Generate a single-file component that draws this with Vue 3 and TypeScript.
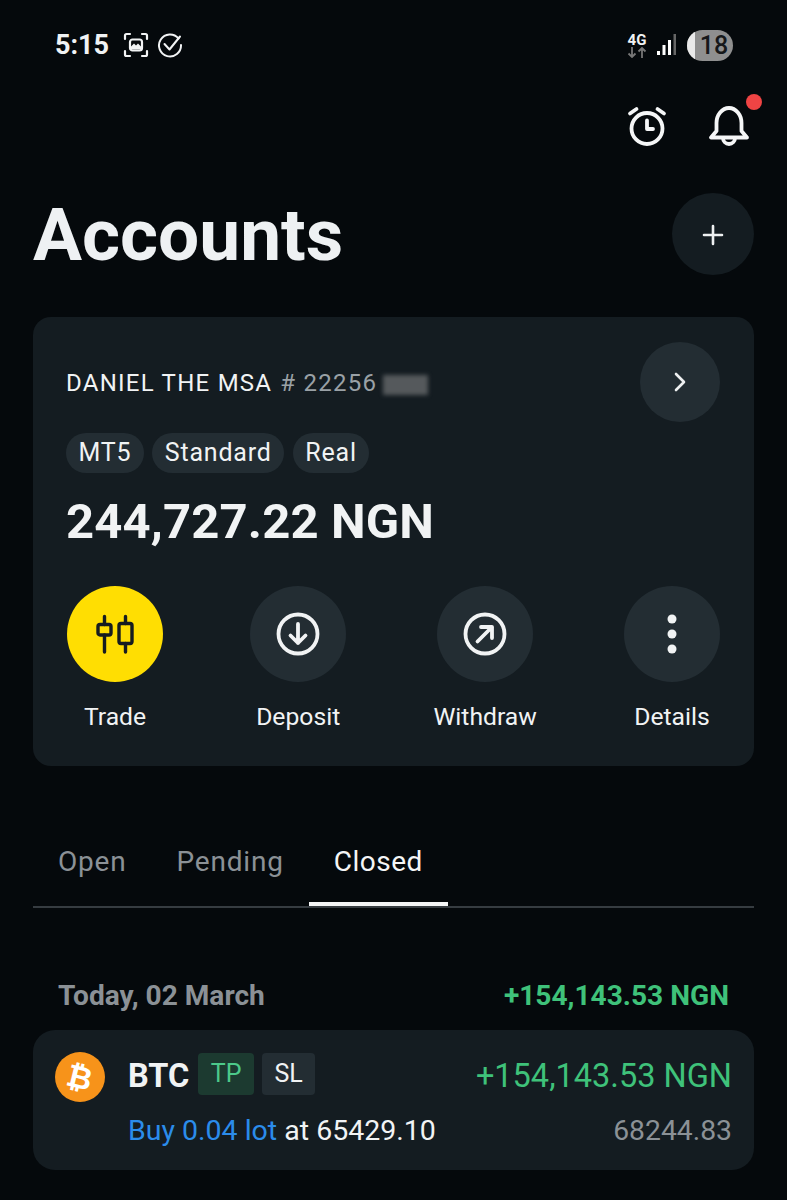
<template>
  <div class="page">
    <div class="status-bar">
      <div class="status-left">
        <span class="time">5:15</span>
        <svg class="shot-icon" width="26" height="26" viewBox="0 0 26 26" fill="none" stroke="#f2f4f5" stroke-width="2.2" stroke-linecap="round">
          <path d="M2 7V3.500A1.500 1.500 0 0 1 3.500 2H7M19 2h3.500A1.500 1.500 0 0 1 24 3.500V7M24 19v3.500a1.500 1.500 0 0 1-1.500 1.500H19M7 24H3.500A1.500 1.500 0 0 1 2 22.500V19" />
          <rect x="7" y="7.500" width="12" height="11" rx="2.500" />
          <path d="M7.500 15l3.500-3.500 2 2 2-2 3.500 3.500v2.500h-11z" fill="#f2f4f5" stroke="none" />
        </svg>
        <svg class="check-icon" width="26" height="26" viewBox="0 0 26 26" fill="none" stroke="#f2f4f5" stroke-width="2" stroke-linecap="round" stroke-linejoin="round">
          <path d="M21.500 6.500A11 11 0 1 0 24 13" />
          <path d="M7.500 12l5 5.500 10.500-13" />
        </svg>
      </div>
      <div class="status-right">
        <div class="net">
          <span class="net-label">4G</span>
          <svg width="20" height="11" viewBox="0 0 20 11" fill="none" stroke="#777" stroke-width="1.800">
            <path d="M5 0v10M1.500 6.500L5 10l3.500-3.500M15 11V1M11.500 4.500L15 1l3.500 3.500" />
          </svg>
        </div>
        <svg class="signal" width="20" height="22" viewBox="0 0 20 22">
          <rect x="0" y="17" width="3" height="4" fill="#fff" />
          <rect x="5.500" y="11" width="3" height="10" fill="#fff" />
          <rect x="11" y="6" width="3" height="15" fill="#fff" />
          <rect x="16.500" y="0" width="2.500" height="21" fill="#666" />
        </svg>
        <div class="battery"><span class="battery-fill"></span><span class="battery-text">18</span></div>
      </div>
    </div>

    <div class="top-actions">
      <svg width="42" height="42" viewBox="0 0 42 42" fill="none" stroke="#f5f6f7" stroke-width="3.800" stroke-linecap="round" stroke-linejoin="round">
        <circle cx="21" cy="23.500" r="15.500" />
        <path d="M21 15.500v8.500h6" />
        <path d="M4 8.500l6.500-4.500M38 8.500L31.500 4" />
      </svg>
      <div class="bell-wrap">
        <svg width="42" height="44" viewBox="0 0 42 44" fill="none" stroke="#f5f6f7" stroke-width="3.800" stroke-linecap="round" stroke-linejoin="round">
          <path d="M3 32.500h36l-5.500-6.500V18C33.500 10 28 3 21 3S8.500 10 8.500 18v8z" />
          <path d="M15 33a6 6 0 0 0 12 0" />
        </svg>
        <span class="bell-dot"></span>
      </div>
    </div>

    <div class="heading">
      <h1 class="title">Accounts</h1>
      <button class="add-btn">
        <svg width="22" height="22" viewBox="0 0 22 22" stroke="#eef0f1" stroke-width="2.600" stroke-linecap="round">
          <path d="M11 2v18M2 11h18" />
        </svg>
      </button>
    </div>

    <section class="account-card">
      <div class="account-head">
        <div class="account-name">
          <span>DANIEL THE MSA</span>
          <span class="account-no"># 22256</span>
          <span class="blur-patch"></span>
        </div>
        <button class="chevron-btn">
          <svg width="14" height="20" viewBox="0 0 14 20" fill="none" stroke="#eef0f1" stroke-width="2.600" stroke-linecap="round" stroke-linejoin="round">
            <path d="M3 2l8 8-8 8" />
          </svg>
        </button>
      </div>
      <div class="pills">
        <span class="pill" v-for="tag in tags" :key="tag">{{ tag }}</span>
      </div>
      <div class="balance">244,727.22 NGN</div>
      <div class="card-actions">
        <div class="card-action">
          <div class="round yellow">
            <svg width="42" height="40" viewBox="0 0 42 40" fill="none" stroke="#161c20" stroke-width="3.400" stroke-linecap="round" stroke-linejoin="round">
              <path d="M10.500 2.500v8M10.500 21v17M31.500 2.500v7M31.500 29.500V38" />
              <rect x="4" y="10.500" width="13" height="10.500" rx="2" />
              <rect x="25" y="9.500" width="13" height="20" rx="2" />
            </svg>
          </div>
          <span class="action-label">Trade</span>
        </div>
        <div class="card-action">
          <div class="round">
            <svg width="44" height="44" viewBox="0 0 44 44" fill="none" stroke="#f1f3f4" stroke-width="3.800" stroke-linecap="round" stroke-linejoin="round">
              <circle cx="22" cy="22" r="19.500" />
              <path d="M22 12v19M14.500 23.500L22 31l7.500-7.500" />
            </svg>
          </div>
          <span class="action-label">Deposit</span>
        </div>
        <div class="card-action">
          <div class="round">
            <svg width="44" height="44" viewBox="0 0 44 44" fill="none" stroke="#f1f3f4" stroke-width="3.800" stroke-linecap="round" stroke-linejoin="round">
              <circle cx="22" cy="22" r="19.500" />
              <path d="M14.500 29.500L29 15M18 15h11v11" />
            </svg>
          </div>
          <span class="action-label">Withdraw</span>
        </div>
        <div class="card-action">
          <div class="round">
            <svg width="12" height="42" viewBox="0 0 12 42" fill="#f1f3f4">
              <circle cx="6" cy="6" r="4.500" />
              <circle cx="6" cy="21" r="4.500" />
              <circle cx="6" cy="36" r="4.500" />
            </svg>
          </div>
          <span class="action-label">Details</span>
        </div>
      </div>
    </section>

    <nav class="tabs">
      <span class="tab" v-for="tab in tabs" :key="tab" :class="{ active: tab === 'Closed' }">{{ tab }}</span>
    </nav>

    <div class="day-row">
      <span class="day">Today, 02 March</span>
      <span class="day-total">+154,143.53 NGN</span>
    </div>

    <section class="trade-card">
      <div class="coin"><span class="coin-glyph">₿</span></div>
      <div class="trade-body">
        <div class="trade-line">
          <div class="trade-symbol">
            <span class="symbol">BTC</span>
            <span class="badge tp">TP</span>
            <span class="badge">SL</span>
          </div>
          <span class="profit">+154,143.53 NGN</span>
        </div>
        <div class="trade-line second">
          <span class="open-info"><span class="buy">Buy 0.04 lot</span> at 65429.10</span>
          <span class="close-price">68244.83</span>
        </div>
      </div>
    </section>
  </div>
</template>

<script setup lang="ts">
const tags: string[] = ["MT5", "Standard", "Real"];
const tabs: string[] = ["Open", "Pending", "Closed"];
</script>

<style>
html,
body {
  margin: 0;
  background: #05090c;
}
</style>

<style scoped>
.page {
  width: 787px;
  height: 1200px;
  overflow: hidden;
  box-sizing: border-box;
  padding: 0 33px;
  background: #05090c;
  color: #f1f3f4;
  font-family: Roboto, "Liberation Sans", sans-serif;
}

.status-bar {
  height: 90px;
  display: flex;
  justify-content: space-between;
  align-items: center;
  padding: 0 21px 0 22px;
}
.status-left {
  display: flex;
  align-items: center;
  gap: 9px;
}
.time {
  font-size: 27px;
  font-weight: 700;
  margin-right: 5px;
}
.check-icon {
  margin-left: -1px;
}
.status-right {
  display: flex;
  align-items: center;
  gap: 10px;
}
.net {
  display: flex;
  flex-direction: column;
  align-items: center;
  width: 20px;
}
.net-label {
  font-size: 15px;
  font-weight: 700;
  line-height: 14px;
}
.battery {
  width: 46px;
  height: 31px;
  border-radius: 16px;
  background: #8f8f8f;
  overflow: hidden;
  display: flex;
  align-items: center;
}
.battery-fill {
  width: 8px;
  height: 100%;
  background: #e9e9e9;
}
.battery-text {
  flex: 1;
  text-align: center;
  color: #16181a;
  font-size: 25px;
  font-weight: 500;
}

.top-actions {
  height: 73px;
  display: flex;
  justify-content: flex-end;
  align-items: flex-start;
  gap: 40px;
  padding: 15px 4px 0 0;
  box-sizing: border-box;
}
.bell-wrap {
  position: relative;
}
.bell-dot {
  position: absolute;
  top: -11px;
  right: -12px;
  width: 16px;
  height: 16px;
  border-radius: 50%;
  background: #ef4444;
}

.heading {
  height: 82px;
  margin-top: 30px;
  display: flex;
  justify-content: space-between;
  align-items: center;
}
.title {
  margin: 2px 0 0;
  font-size: 73px;
  line-height: 82px;
  font-weight: 700;
  color: #eef1f3;
}
.add-btn {
  width: 82px;
  height: 82px;
  border: none;
  padding: 2px 0 0;
  border-radius: 50%;
  background: #141c21;
  display: flex;
  align-items: center;
  justify-content: center;
}

.account-card {
  height: 449px;
  margin-top: 42px;
  box-sizing: border-box;
  padding: 25px 34px 0 33px;
  border-radius: 18px;
  background: #141c21;
}
.account-head {
  display: flex;
  justify-content: space-between;
  align-items: center;
  height: 80px;
}
.account-name {
  display: flex;
  align-items: center;
  gap: 8px;
  margin-top: 2px;
  font-size: 24px;
  letter-spacing: 1.250px;
}
.account-no {
  color: #9aa1a6;
}
.blur-patch {
  width: 45px;
  height: 20px;
  margin: 4px 0 0 -2px;
  background: #55595c;
  filter: blur(2px);
}
.chevron-btn {
  width: 80px;
  height: 80px;
  padding: 0;
  border: none;
  border-radius: 50%;
  background: #232d33;
  display: flex;
  align-items: center;
  justify-content: center;
}
.pills {
  display: flex;
  gap: 8.500px;
  margin-top: 11px;
}
.pill {
  height: 40px;
  line-height: 40px;
  padding: 0 12.500px;
  border-radius: 20px;
  background: #232d33;
  font-size: 25px;
  letter-spacing: 0.800px;
}
.balance {
  margin-top: 21px;
  font-size: 49px;
  line-height: 56px;
  font-weight: 700;
  letter-spacing: 0.150px;
}
.card-actions {
  display: flex;
  justify-content: space-between;
  margin: 36px 0 0 1px;
}
.card-action {
  min-width: 96px;
  display: flex;
  flex-direction: column;
  align-items: center;
}
.round {
  width: 96px;
  height: 96px;
  border-radius: 50%;
  background: #232d33;
  display: flex;
  align-items: center;
  justify-content: center;
}
.round.yellow {
  background: #ffde02;
}
.action-label {
  margin-top: 21px;
  font-size: 24.700px;
  line-height: 28px;
  white-space: nowrap;
}

.tabs {
  height: 142px;
  box-sizing: border-box;
  display: flex;
  align-items: flex-end;
  gap: 1px;
  border-bottom: 2px solid #363c41;
}
.tab {
  height: 62px;
  padding: 1px 25px 0;
  font-size: 28px;
  letter-spacing: 0.800px;
  color: #8b9196;
  box-sizing: border-box;
  margin-left: -1px;
}
.tab:first-child {
  margin-left: 0;
}
.tab.active {
  color: #f4f5f6;
  letter-spacing: 0.500px;
  border-bottom: 4px solid #f4f5f6;
}

.day-row {
  display: flex;
  justify-content: space-between;
  align-items: center;
  height: 40px;
  margin-top: 67px;
  padding: 0 25px;
  font-size: 28.100px;
  font-weight: 700;
}
.day {
  color: #8b9196;
}
.day-total {
  color: #3fc27a;
}

.trade-card {
  height: 140px;
  margin-top: 15px;
  box-sizing: border-box;
  padding: 22px 22px 0 22px;
  border-radius: 22px;
  background: #141c21;
  display: flex;
  gap: 23px;
}
.coin {
  width: 50px;
  height: 50px;
  flex: none;
  border-radius: 50%;
  background: #f7931a;
  display: flex;
  align-items: center;
  justify-content: center;
}
.coin-glyph {
  font-family: "DejaVu Sans", sans-serif;
  font-weight: 700;
  font-size: 31px;
  line-height: 1;
  color: #fff;
  transform: rotate(14deg);
}
.trade-body {
  flex: 1;
}
.trade-line {
  display: flex;
  justify-content: space-between;
  align-items: center;
  height: 44px;
}
.trade-line.second {
  margin-top: 12px;
}
.trade-symbol {
  display: flex;
  align-items: center;
  gap: 8px;
}
.symbol {
  font-size: 32.500px;
  font-weight: 700;
  margin-right: 1px;
  padding-top: 3px;
}
.badge {
  height: 42px;
  line-height: 42px;
  padding: 0 12.500px;
  border-radius: 4px;
  background: #232d33;
  font-size: 25px;
}
.badge.tp {
  background: #1c3a30;
  color: #4cc98a;
}
.profit {
  font-size: 32.500px;
  color: #3fc27a;
  padding-top: 3px;
}
.open-info {
  font-size: 28.500px;
}
.buy {
  color: #2b8ceb;
}
.close-price {
  font-size: 28.300px;
  color: #8b9196;
}
</style>
